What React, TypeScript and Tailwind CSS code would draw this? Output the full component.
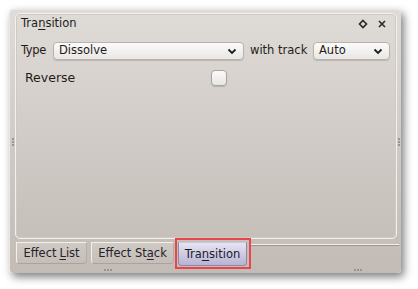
import React from "react";

const font = { fontFamily: '"DejaVu Sans", "Liberation Sans", sans-serif' };

const Chevron = () => (
  <svg width="10" height="7" viewBox="0 0 10 7">
    <path d="M1.5 1.5 L5 5 L8.5 1.5" fill="none" stroke="#1e1e1e" strokeWidth="1.8" />
  </svg>
);

const Combo: React.FC<{ label: string; w: string }> = ({ label, w }) => (
  <div
    className={`${w} h-[18px] flex items-center justify-between pl-[5px] pr-[6px] rounded-[4px] border border-[#b9b3ae] bg-gradient-to-b from-[#fbfbfa] to-[#e9e7e5] shadow-[0_1px_1px_rgba(0,0,0,0.15)] text-[11.5px] text-[#1f1c1a]`}
  >
    <span>{label}</span>
    <Chevron />
  </div>
);

const Grip: React.FC<{ vertical?: boolean }> = ({ vertical }) => (
  <div className={`flex ${vertical ? "flex-col" : "flex-row"} gap-[1px]`}>
    <div className="w-[2px] h-[2px] bg-[#9a948f]" />
    <div className="w-[2px] h-[2px] bg-[#9a948f]" />
    <div className="w-[2px] h-[2px] bg-[#9a948f]" />
  </div>
);

const Tab: React.FC<{ children: React.ReactNode; w: string }> = ({ children, w }) => (
  <div
    className={`${w} h-[22px] pt-[2px] flex items-center justify-center rounded-b-[4px] border border-[#f2efec] border-r-[#b3aca7] border-b-[#a9a29d] bg-gradient-to-b from-[#d0cac5] to-[#c4bdb8] text-[11.5px] text-[#26222a]`}
  >
    {children}
  </div>
);

export default function App() {
  return (
    <div className="w-[418px] h-[289px] bg-white pl-[9px] pt-[9px]" style={font}>
      <div className="relative w-[392px] h-[264px] rounded-[4px] bg-gradient-to-b from-[#dfdbd7] to-[#c2bbb6] shadow-[3px_4px_8px_rgba(0,0,0,0.5)] border-l border-t border-[#ebe8e5] flex flex-col">
        {/* side grips */}
        <div className="absolute left-[2px] top-[128px]">
          <Grip vertical />
        </div>
        <div className="absolute right-[1px] top-[128px]">
          <Grip vertical />
        </div>

        {/* dock panel */}
        <div className="ml-[5px] mr-[4px] mt-[3px] h-[226px] rounded-[5px] border border-[#f3f1ef] shadow-[inset_0_0_0_1px_#cfc9c4] flex flex-col">
          <div className="h-[18px] pt-[1px] flex items-center justify-between pl-[5px] pr-[9px] text-[11.5px] text-[#1f1c1a]">
            <span>
              Tra<span className="underline underline-offset-2">n</span>sition
            </span>
            <div className="flex items-center gap-[9px]">
              <svg width="10" height="10" viewBox="0 0 10 10">
                <path d="M5 1.5 L8.5 5 L5 8.5 L1.5 5 Z" fill="none" stroke="#2a2725" strokeWidth="1.6" />
              </svg>
              <svg width="10" height="10" viewBox="0 0 10 10">
                <path d="M2 2 L8 8 M8 2 L2 8" stroke="#2a2725" strokeWidth="1.6" />
              </svg>
            </div>
          </div>
          <div className="mt-[10px] flex items-center pl-[5px] text-[11.5px] text-[#1f1c1a]">
            <span className="w-[32px] tracking-[-0.4px]">Type</span>
            <Combo label="Dissolve" w="w-[191px]" />
            <span className="ml-[6px] w-[63px]">with track</span>
            <Combo label="Auto" w="w-[77px]" />
          </div>
          <div className="mt-[9px] flex items-center pl-[9px] text-[12.5px] text-[#1f1c1a]">
            <span className="w-[186px]">Reverse</span>
            <div className="w-[16px] h-[16px] rounded-[4px] border border-[#aaa49f] bg-gradient-to-b from-[#fbfbfa] to-[#e8e6e4] shadow-[0_1px_1px_rgba(0,0,0,0.15)]" />
          </div>
        </div>

        {/* tab bar */}
        <div className="mt-[3px] flex items-start pl-[6px]">
          <div className="flex items-start gap-[4px]">
            <Tab w="w-[71px]">
              Effect <span className="underline underline-offset-2 ml-[3px]">L</span>ist
            </Tab>
            <Tab w="w-[83px]">
              Effect St<span className="underline underline-offset-2">a</span>ck
            </Tab>
            <div className="relative">
              <div className="w-[69px] h-[24px] pt-[2px] flex items-center justify-center rounded-b-[4px] border border-[#8e89a8] border-t-[#c9c6dc] bg-gradient-to-b from-[#e6e3f3] to-[#b8b4d2] text-[11.5px] text-[#1b1a2a]">
                Tra<span className="underline underline-offset-2">n</span>sition
              </div>
              <div className="absolute -left-[3px] -right-[4px] -top-[4px] -bottom-[3px] border-2 border-[#e8464c]" />
            </div>
          </div>
          <div className="flex-1 ml-[4px] mr-[2px] mt-[2px] h-[2px] bg-[#f5f3f1] border-b border-[#9a948f]" />
        </div>

        {/* bottom grips */}
        <div className="flex-1 flex items-center justify-between pl-[94px] pr-[39px]">
          <Grip />
          <Grip />
        </div>
      </div>
    </div>
  );
}
